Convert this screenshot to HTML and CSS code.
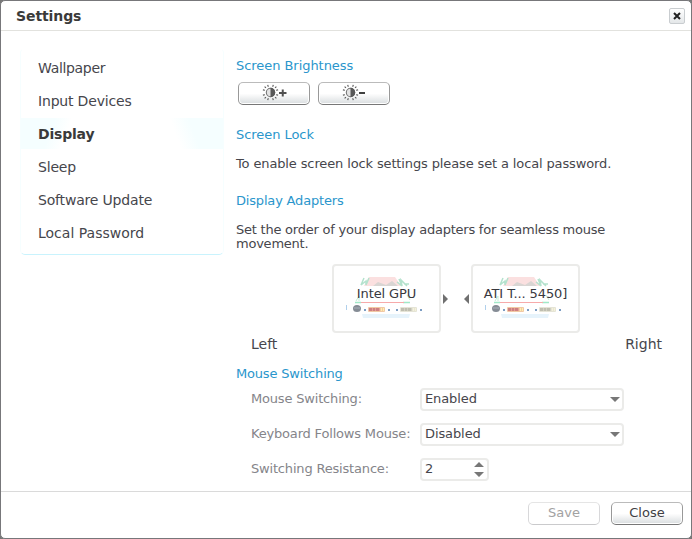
FILE: index.html
```html
<!DOCTYPE html>
<html lang="en">
<head>
<meta charset="utf-8">
<title>Settings</title>
<link rel="stylesheet" href="styles.css">
</head>
<body>
<svg width="0" height="0" class="defs" aria-hidden="true">
  <symbol id="sun" viewBox="0 0 15 15">
    <circle cx="7.500" cy="7.500" r="3.700" fill="#e2e2e2" stroke="#777" stroke-width="1"/>
    <path d="M7.500 3.300a4.200 4.200 0 0 1 0 8.400z" fill="#585858"/>
    <path d="M5 .8l.6 1.600M10 .8l-.6 1.600M5 14.200l.6-1.600M10 14.200l-.6-1.600M.8 5l1.600.6M.8 10l1.600-.6M14.200 5l-1.600.6M14.200 10l-1.600-.6M2.300 2.300l1.200 1.200M12.700 2.300l-1.200 1.200M2.300 12.700l1.200-1.200M12.700 12.700l-1.200-1.200" stroke="#5a5a5a" stroke-width="1"/>
  </symbol>
  <symbol id="desktop" viewBox="0 0 78 44">
    <path d="M23 0h26l6 9H18z" fill="#fbe0e0"/>
    <path d="M27 9l5-4 8 3 6-4 6 5z" fill="#d9d5d3"/>
    <path d="M18 1l-3 7 5-4v4l3-7M53 2l3 7-1-6 6 6M51 5l5 4M58 7h5" stroke="#b4e2cd" stroke-width="1.500" fill="none"/>
    <path d="M10 24l3-5v5M61 18l3 5" stroke="#c4eed9" fill="none"/>
    <path d="M9 25.500h6M57 25.500h7" stroke="#a2e8c8" stroke-width="1.500"/>
    <path d="M15 25.500h43" stroke="#f7aaaa" stroke-width="1.200"/>
    <path d="M.5 28v5" stroke="#b0d0ec"/>
    <ellipse cx="11" cy="31.500" rx="4" ry="3.500" fill="#858c95"/>
    <path d="M8 31h6" stroke="#a8b1b9"/>
    <path d="M18 33h2M42 33h2M50 33h2M74 33h2" stroke="#7b9cc2" stroke-width="2"/>
    <rect x="22" y="30" width="17" height="5" rx="1" fill="#f1c9a5"/>
    <path d="M23 32.500h11" stroke="#cf7f81" stroke-width="3" stroke-dasharray="3 .5"/>
    <path d="M35 32.500h3" stroke="#fff0ae" stroke-width="3" stroke-dasharray="1 1"/>
    <rect x="54" y="30" width="17" height="5" rx="1" fill="#e5e4d6"/>
    <path d="M55 32.500h11" stroke="#bfbeb0" stroke-width="3" stroke-dasharray="3 .5"/>
    <path d="M67 32.500h3" stroke="#f5f2d8" stroke-width="3" stroke-dasharray="1 1"/>
    <path d="M16 37h48l-1 4H17z" fill="#e6f3fb"/>
  </symbol>
</svg>
<div class="window">
  <header class="titlebar">
    <h1>Settings</h1>
    <button class="close" aria-label="Close window"><svg width="10" height="10" viewBox="0 0 10 10"><path d="M2 2l6 6M8 2L2 8" stroke="#222" stroke-width="2"/></svg></button>
  </header>
  <main class="body">
    <nav class="sidebar">
      <a class="tight">Wallpaper</a>
      <a class="snug">Input Devices</a>
      <a class="active">Display</a>
      <a class="snug">Sleep</a>
      <a class="snug">Software Update</a>
      <a>Local Password</a>
    </nav>
    <div class="content">
      <section class="brightness">
        <h2>Screen Brightness</h2>
        <div class="buttons">
          <button class="button"><svg width="17" height="17"><use href="#sun"/></svg><svg class="sign" width="8" height="8"><path d="M0 4h7.500M3.750 .5v7" stroke="#505050" stroke-width="2"/></svg></button>
          <button class="button"><svg width="17" height="17"><use href="#sun"/></svg><svg class="sign" width="8" height="8"><path d="M0 4h6" stroke="#404040" stroke-width="2"/></svg></button>
        </div>
      </section>
      <section class="lock">
        <h2>Screen Lock</h2>
        <p>To enable screen lock settings please set a local password.</p>
      </section>
      <section class="adapters">
        <h2 class="snug">Display Adapters</h2>
        <p class="order">Set the order of your display adapters for seamless mouse<br>movement.</p>
        <div class="cards">
          <div class="card"><svg class="thumb" width="78" height="44"><use href="#desktop"/></svg><span>Intel GPU</span></div>
          <svg width="5" height="10"><path d="M0 0l5 5-5 5z" fill="#707070"/></svg>
          <svg class="arrow-left" width="5" height="10"><path d="M5 0L0 5l5 5z" fill="#707070"/></svg>
          <div class="card"><svg class="thumb" width="78" height="44"><use href="#desktop"/></svg><span>ATI T... 5450]</span></div>
        </div>
        <div class="sides"><span>Left</span><span>Right</span></div>
      </section>
      <section class="switching">
        <h2 class="snug">Mouse Switching</h2>
        <div class="row"><label>Mouse Switching:</label><div class="field">Enabled<svg width="10" height="5"><path d="M0 0h10L5 5z" fill="#777"/></svg></div></div>
        <div class="row"><label>Keyboard Follows Mouse:</label><div class="field">Disabled<svg width="10" height="5"><path d="M0 0h10L5 5z" fill="#777"/></svg></div></div>
        <div class="row"><label>Switching Resistance:</label><div class="field spin">2<svg width="10" height="15"><path d="M0 5h10L5 0zM0 10h10l-5 5z" fill="#777"/></svg></div></div>
      </section>
    </div>
  </main>
  <footer class="footer">
    <button class="button disabled">Save</button>
    <button class="button">Close</button>
  </footer>
</div>
</body>
</html>
```
FILE: styles.css
```css
* { box-sizing: border-box; }
body {
  margin: 0;
  background: #777;
  font: 13px/14px "DejaVu Sans", sans-serif;
  color: #46464c;
}
.defs { display: block; height: 0; }
h1, h2, p { margin: 0; font-weight: normal; font-size: inherit; }
.window {
  width: 692px;
  height: 539px;
  border: 1px solid #77777a;
  border-radius: 5px;
  background: #fff;
  display: flex;
  flex-direction: column;
}
.titlebar {
  height: 30px;
  border-bottom: 1px solid #e2e2de;
  padding: 0 6px 0 15px;
  display: flex;
  align-items: center;
  justify-content: space-between;
}
.titlebar h1 { font-size: 14px; font-weight: bold; color: #3a3a3a; letter-spacing: -0.1px; }
.close {
  width: 16px;
  height: 16px;
  padding: 0;
  border: 1px solid #c9cdd0;
  border-radius: 2px;
  background: linear-gradient(#fff, #e4e7e9);
  display: grid;
  place-items: center;
}
.body { flex: 1; display: flex; padding: 17px 0 0 19px; }
.sidebar {
  width: 204px;
  height: 207px;
  padding-top: 3px;
  border: 1px solid #f6feff;
  border-top-color: #fff;
  border-bottom-color: #c9f3fd;
  border-radius: 5px;
}
.sidebar a {
  display: flex;
  align-items: center;
  height: 33px;
  padding: 0 0 2px 17px;
  font-size: 14px;
}
.snug { letter-spacing: -0.18px; }
.tight { letter-spacing: -0.32px; }
.sidebar .active {
  font-weight: bold;
  color: #3a3a3a;
  letter-spacing: -0.2px;
  background: linear-gradient(70deg, transparent 75%, #f5feff 84%) 0 0 / 100% 31px no-repeat, linear-gradient(110deg, #f5feff 16%, #fff 24%) 0 0 / 100% 31px no-repeat;
}
.content { width: 440px; margin-left: 12px; }
h2 { color: #2a96cc; letter-spacing: -0.05px; }
h2.snug { letter-spacing: -0.18px; }
.brightness { height: 69px; padding-top: 11px; }
.buttons { display: flex; gap: 8px; padding: 9px 0 0 2px; }
.button {
  width: 72px;
  height: 23px;
  padding: 0;
  border: 1px solid;
  border-color: #bbb #999 #777;
  border-radius: 5px;
  background: linear-gradient(#fff 50%, #d9dddf);
  box-shadow: inset 0 0 0 1px #fff;
  display: flex;
  align-items: center;
  justify-content: center;
  font: 13px/15px "DejaVu Sans", sans-serif;
  color: #404044;
}
.button svg { margin-bottom: 2px; }
.button .sign { margin-left: 0; }
.footer .button { padding-bottom: 2px; }
.button.disabled { border-color: #e5e5e5 #d8d8da #cacacc; background: #fff; color: #a2a2a2; }
.lock { height: 66px; padding-top: 11px; }
.lock p, .adapters p { padding-top: 15px; }
.lock p { letter-spacing: -0.13px; }
.adapters .order { letter-spacing: -0.23px; }
.adapters { height: 173px; padding-top: 11px; }
.cards { display: flex; align-items: center; padding: 13px 0 0 96px; }
.card {
  width: 109px;
  height: 69px;
  border: 2px solid #ebebe9;
  border-radius: 4px;
  display: grid;
  place-items: center;
}
.card > * { grid-area: 1 / 1; }
.card .thumb { margin: 0 0 0 -4px; }
.card span { z-index: 1; margin-bottom: 10px; color: #38383e; letter-spacing: -0.1px; }
.cards > svg { margin-left: 2px; }
.cards > .arrow-left { margin: 0 2px 0 16px; }
.sides { display: flex; justify-content: space-between; padding: 4px 14px 0 15px; font-size: 14px; }
.switching { padding-top: 11px; }
.row { display: flex; height: 35px; align-items: center; padding-left: 15px; }
.row label { width: 169px; color: #85858a; letter-spacing: -0.18px; }
.field {
  width: 204px;
  height: 23px;
  margin-top: 2px;
  border: 2px solid #ebebe9;
  border-radius: 4px;
  padding: 0 3px 2px;
  display: flex;
  align-items: center;
  justify-content: space-between;
  letter-spacing: -0.1px;
}
.field svg { margin: 1px -1px 0 0; }
.spin { width: 69px; }
.spin svg { margin-right: 0; }
.footer {
  height: 47px;
  border-top: 1px solid #dadada;
  padding: 10px 8px 0 0;
  display: flex;
  justify-content: flex-end;
  gap: 11px;
}
```
